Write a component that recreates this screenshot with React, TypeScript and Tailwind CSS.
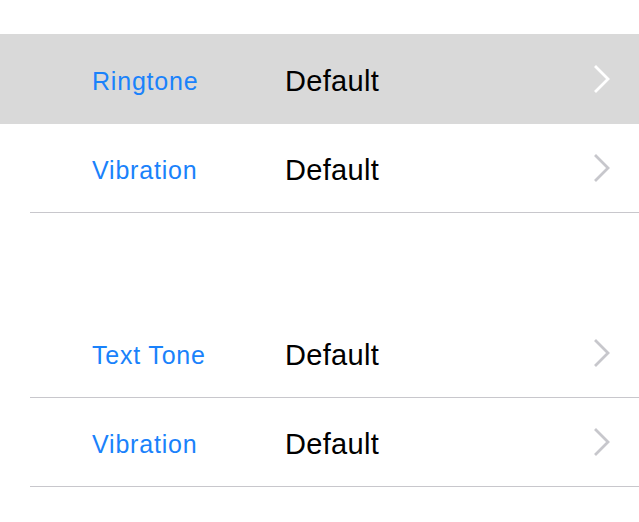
import React from 'react';

interface RowProps {
  label: string;
  value: string;
  selected?: boolean;
  divider?: boolean;
}

const Chevron: React.FC<{ color: string }> = ({ color }) => (
  <svg width="20" height="30" viewBox="0 0 20 30" className="shrink-0">
    <path d="M4 3 L16 15 L4 27" fill="none" stroke={color} strokeWidth="2.8" strokeLinecap="square" strokeLinejoin="miter" />
  </svg>
);

const Row: React.FC<RowProps> = ({ label, value, selected, divider }) => (
  <div>
    <div
      className={
        selected
          ? 'h-[90px] bg-[#d9d9d9] flex items-center pl-[92px] pr-[27px]'
          : 'h-[88px] bg-white flex items-center pl-[92px] pr-[27px]'
      }
    >
      <span className="w-[193px] pt-[5px] text-[25px] tracking-[0.8px] text-[#1a82fb]">{label}</span>
      <span className="flex-1 pt-[5px] text-[29px] tracking-[0.3px] text-black">{value}</span>
      <Chevron color={selected ? '#ffffff' : '#c7c7cc'} />
    </div>
    {divider && <div className="ml-[30px] h-px bg-[#c8c7cc]" />}
  </div>
);

const App: React.FC = () => {
  return (
    <div className="w-[639px] h-[522px] bg-white overflow-hidden pt-[34px] font-['Liberation_Sans',Arial,sans-serif]">
      <Row label="Ringtone" value="Default" selected />
      <Row label="Vibration" value="Default" divider />
      <div className="h-[96px]" />
      <Row label="Text Tone" value="Default" divider />
      <Row label="Vibration" value="Default" divider />
    </div>
  );
};

export default App;
